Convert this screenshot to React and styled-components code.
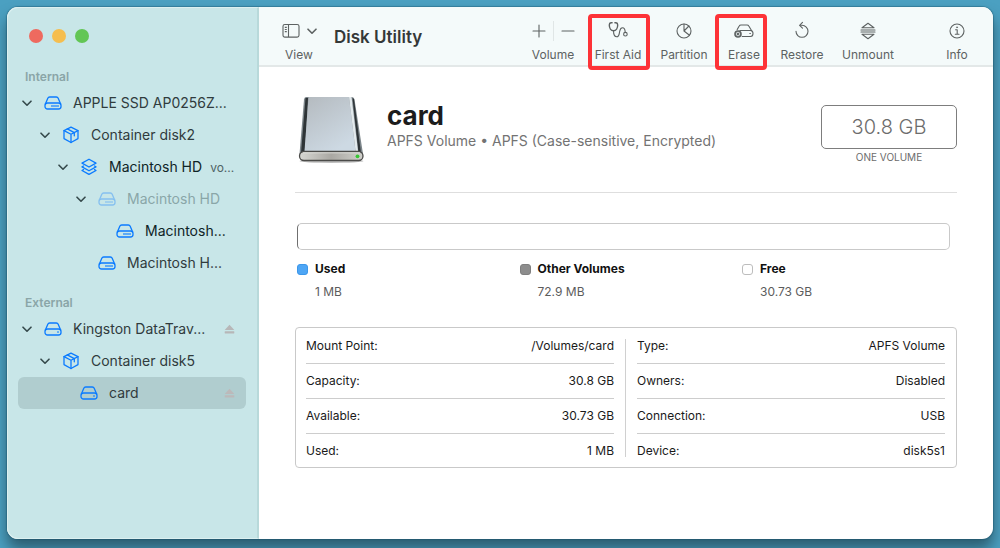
import React, { useState } from 'react';
import styled, { createGlobalStyle } from 'styled-components';

const GlobalStyle = createGlobalStyle`
    *,
    *::before {
        box-sizing: border-box;
    }
    body {
        margin: 0;
        font-family: Inter, "Liberation Sans", sans-serif;
        color: #1d1d1d;
        background: #4ba0c1;
    }
    button {
        padding: 0;
        border: 0;
        background: transparent;
        font: inherit;
        color: inherit;
    }
    svg {
        display: block;
        flex: none;
    }
`

const Desktop = styled.div`
    display: flex;
    min-height: 100vh;
    padding: 7px 7px 9px;
    overflow: hidden;
    background: #4ba0c1;
`
const Window = styled.div`
    display: flex;
    flex: 1;
    border-radius: 11px;
    background: #fff;
    box-shadow: 0 0 1px 1px rgba(20, 80, 105, 0.4), 0 10px 14px rgba(25, 50, 60, 0.6);
`
const Sidebar = styled.aside`
    flex: none;
    width: 252px;
    padding: 21px 11px 0 10px;
    border: 1px solid #dcf0f0;
    border-right: 2px solid #b8d9da;
    border-radius: 11px 0 0 11px;
    background: #c8e6e8;
`
const Lights = styled.div`
    display: flex;
    gap: 9px;
    padding-left: 11px;
    margin-bottom: 26px;
`
const Light = styled.button`
    width: 14px;
    height: 14px;
    border-radius: 50%;
    background: ${(props) => props.$color};
`
const Group = styled.section`
    margin-bottom: 16px;
`
const GroupTitle = styled.h2`
    margin: 0 0 2px;
    padding-left: 7px;
    font-size: 12px;
    line-height: 16px;
    font-weight: 600;
    color: #8aa5a7;
`
const DiskRow = styled.div`
    display: flex;
    align-items: center;
    height: 32px;
    padding-left: ${(props) => 3 + props.$level * 18}px;
    padding-right: 11px;
    border-radius: 6px;
    background: ${(props) => (props.$active ? '#b0cdcf' : 'transparent')};
`
const Toggle = styled.button`
    display: flex;
    flex: none;
    justify-content: center;
    width: 12px;
    margin-right: 11px;
    color: #35494b;
`
const DiskButton = styled.button`
    display: flex;
    align-items: center;
    gap: 11px;
    flex: 1;
    min-width: 0;
    font-size: 14px;
    line-height: 20px;
    white-space: nowrap;
    color: ${(props) => (props.$dim ? '#8aa6a8' : props.$strong ? '#0e2326' : '#303b3d')};
    svg {
        color: #0b7bff;
        opacity: ${(props) => (props.$dim ? 0.35 : 1)};
    }
    small {
        margin-left: 8px;
        font-size: 12px;
        color: #4f6365;
    }
`
const Eject = styled.button`
    color: ${(props) => (props.$active ? '#bcb9ba' : '#b7b7b8')};
`
const Main = styled.main`
    flex: 1;
    min-width: 0;
`
const Toolbar = styled.header`
    display: flex;
    height: 60px;
    padding-right: 8px;
    border-bottom: 2px solid #e3e8e8;
    border-radius: 0 11px 0 0;
    background: #f4fafa;
    color: #5d6262;
`
const ViewMenu = styled.button`
    display: flex;
    flex-direction: column;
    gap: 5px;
    margin-left: 23px;
    padding-top: 14px;
    text-align: left;
    > span + span {
        padding-left: 3px;
    }
`
const Tool = styled.button`
    position: relative;
    display: flex;
    flex-direction: column;
    align-items: center;
    gap: 5px;
    width: ${(props) => props.$width}px;
    padding-top: 14px;
`
const ToolPair = styled.div`
    display: flex;
    flex-direction: column;
    align-items: center;
    gap: 5px;
    width: 64px;
    padding-top: 14px;
`
const PairButtons = styled.div`
    display: flex;
    button + button {
        padding-left: 4px;
        border-left: 1px solid #e0e6e6;
    }
    button:first-child {
        padding-right: 4px;
    }
`
const ToolIcon = styled.span`
    display: flex;
    align-items: center;
    gap: 7px;
    height: 20px;
`
const ToolLabel = styled.span`
    font-size: 12px;
    line-height: 18px;
    white-space: nowrap;
`
const Highlight = styled.span`
    position: absolute;
    top: 7px;
    bottom: -5px;
    left: ${(props) => props.$left}px;
    right: ${(props) => props.$right}px;
    border: 4px solid #fd3237;
    border-radius: 4px;
`
const Title = styled.h1`
    flex: 1;
    margin: 0 0 0 17px;
    padding-top: 18px;
    font-size: 17px;
    line-height: 24px;
    font-weight: 600;
    color: #343838;
`
const Gap = styled.span`
    width: 26px;
`
const Content = styled.div`
    padding: 29px 36px 24px;
`
const Hero = styled.section`
    display: flex;
    align-items: flex-start;
    height: 97px;
    border-bottom: 1px solid #dedede;
`
const Heading = styled.div`
    flex: 1;
    padding: 4px 0 0 18px;
    h2 {
        margin: 0;
        font-size: 26px;
        line-height: 31px;
        font-weight: 700;
        color: #1c1c1c;
    }
    p {
        margin: 0;
        font-size: 14px;
        line-height: 20px;
        color: #737373;
    }
`
const Capacity = styled.div`
    width: 136px;
    padding-top: 9px;
    text-align: center;
    color: #6c6c6c;
    strong {
        display: block;
        border: 1px solid #7d7d7d;
        border-radius: 5px;
        font-size: 20px;
        line-height: 42px;
        font-weight: 300;
    }
    span {
        display: block;
        font-size: 10px;
        line-height: 16px;
    }
`
const UsageBar = styled.div`
    height: 27px;
    margin: 30px 7px 0 2px;
    border: 1px solid #c9c9c9;
    border-left-color: #6f6f6f;
    border-radius: 5px;
`
const Legend = styled.dl`
    display: grid;
    grid-template-columns: 1fr 1fr 215px;
    margin: 9px 0 0 2px;
`
const LegendItem = styled.div`
    dt {
        display: flex;
        align-items: center;
        gap: 7px;
        font-size: 12px;
        line-height: 20px;
        font-weight: 700;
        color: #111;
    }
    dt::before {
        content: '';
        width: 11px;
        height: 11px;
        border: 1px solid ${(props) => props.$border};
        border-radius: 3px;
        background: ${(props) => props.$color};
    }
    dd {
        margin: 4px 0 0 18px;
        font-size: 12px;
        line-height: 18px;
        color: #5c5c5c;
    }
`
const InfoPanel = styled.section`
    display: flex;
    margin-top: 26px;
    padding: 1px 11px 0 10px;
    border: 1px solid #c9c9c9;
    border-radius: 4px;
`
const Divider = styled.span`
    width: 1px;
    margin: 10px 11px;
    background: #d0d0d0;
`
const InfoTable = styled.table`
    flex: 1;
    border-spacing: 0;
    font-size: 12px;
    line-height: 17px;
    color: #1a1a1a;
    th,
    td {
        padding: 8px 0 9px;
        border-bottom: 1px solid #cdcdcd;
        font-weight: 400;
        text-align: left;
    }
    td {
        text-align: right;
    }
    tr:last-child > * {
        padding-bottom: 8px;
        border-bottom: 0;
    }
`

function Chevron() {
  return (
    <svg width="10" height="10" viewBox="0 0 10 10" fill="none" stroke="currentColor" strokeWidth="1.6" strokeLinecap="round" strokeLinejoin="round">
      <path d="M1 3.2 5 7.2 9 3.2" />
    </svg>
  );
}

function DriveIcon({ external }) {
  return (
    <svg width="18" height="18" viewBox="0 0 18 18" fill="none" stroke="currentColor" strokeWidth="1.3" strokeLinejoin="round">
      <path d="M1.3 10.2 3.8 4.2Q4.3 3 5.7 3h6.6Q13.7 3 14.2 4.2L16.7 10.2" />
      <rect x="1" y="9" width="16" height="6" rx="2.5" />
      {external ? <circle cx="14" cy="12" r=".5" fill="currentColor" strokeWidth=".6" /> : <path d="M7 12h8" strokeWidth="1.5" opacity=".75" />}
    </svg>
  );
}

function BoxIcon() {
  return (
    <svg width="18" height="18" viewBox="0 0 18 18" fill="none" stroke="currentColor" strokeWidth="1.3" strokeLinejoin="round" strokeLinecap="round">
      <path d="M9 1.2 16 4.6v8L9 16.5 2 12.6v-8Z" />
      <path d="M2 4.6 9 8.3l7-3.7M9 8.3v8.2M5.3 2.9l7 3.7v3.2" />
    </svg>
  );
}

function LayersIcon() {
  return (
    <svg width="18" height="18" viewBox="0 0 18 18" fill="none" stroke="currentColor" strokeWidth="1.3" strokeLinejoin="round" strokeLinecap="round">
      <path d="m9 1.2 7 3.9-7 3.9-7-3.9Z" />
      <path d="m3.5 8-1.5.9 7 3.9 7-3.9L14.5 8M3.5 11.6l-1.5.9 7 3.9 7-3.9-1.5-.9" />
    </svg>
  );
}

function EjectIcon() {
  return (
    <svg width="11" height="11" viewBox="0 0 11 11" fill="currentColor">
      <path d="M5.5.8 10.3 6H.7Z" />
      <rect x=".7" y="7.3" width="9.6" height="2.2" rx=".4" />
    </svg>
  );
}

const toolIcons = {
  aid: (
    <>
      <path d="M4.1 1.8H3Q1.300 2 1.300 4c0 3 1.600 5.800 4.200 5.800S9.700 7 9.700 4Q9.700 2 8 1.800H6.900" strokeWidth="1.400" />
      <path d="M5.500 9.800c0 3.500 1.300 6 3.300 6 2.700 0 2.300-3.500 3-6 .5-2 1.400-3 2.700-3 1.900 0 2.600 1.800 2.700 4.500" />
      <circle cx="17.400" cy="13.200" r="1.800" />
    </>
  ),
  pie: (
    <>
      <circle cx="10" cy="10" r="7" />
      <path d="M10 3v7l4.900-5M10 10l5.500 4.200" />
    </>
  ),
  erase: (
    <>
      <path d="M3.200 8.600 5.200 5Q5.700 4 7 4h6Q14.300 4 14.800 5l3 5" />
      <path d="M6 9.500h10.500q2.500 0 2.500 3t-2.500 3H8.200M15.800 12.500h.6" />
      <circle cx="4" cy="13" r="3" strokeWidth="1.600" />
      <path d="m2.900 11.900 2.200 2.200m0-2.200-2.200 2.200" />
    </>
  ),
  restore: (
    <>
      <path d="M8.300 4.300H10A6 6 0 1 1 4 10.300" />
      <path d="M10.500 1.300 7.600 4.300l2.900 2.900" />
    </>
  ),
  unmount: (
    <>
      <path d="M10 2.200 16 6.700H4ZM10 17.800 4 13.300h12Z" />
      <path d="M3 9h14M3 11h14" />
    </>
  ),
  info: (
    <>
      <circle cx="10" cy="10" r="7" />
      <path d="M8.600 8.800h1.600v4.400M8.300 13.300h3.700" />
      <circle cx="10" cy="6.300" r=".6" fill="currentColor" strokeWidth=".5" />
    </>
  ),
  plus: <path d="M10 4v12M4 10h12" />,
  minus: <path d="M4 10h12" />,
};

function ToolGlyph({ name }) {
  return (
    <svg width="20" height="20" viewBox="0 0 20 20" fill="none" stroke="currentColor" strokeWidth="1.1" strokeLinecap="round" strokeLinejoin="round">
      {toolIcons[name]}
    </svg>
  );
}

function SidebarIcon() {
  return (
    <svg width="18" height="16" viewBox="0 0 18 16" fill="none" stroke="currentColor" strokeWidth="1.1">
      <rect x="1" y="1.5" width="16" height="12.6" rx="1.8" />
      <path d="M6.5 1.5v12.6M2.8 4.4h2M2.8 6.5h2M2.8 8.6h2" />
    </svg>
  );
}

function DriveArt() {
  return (
    <svg width="74" height="74" viewBox="0 0 74 74">
      <defs>
        <linearGradient id="top" x1="0" y1="0" x2=".6" y2="1">
          <stop offset="0" stopColor="#b4babf" />
          <stop offset="1" stopColor="#cdd9e3" />
        </linearGradient>
        <linearGradient id="front" x1="0" y1="0" x2="1" y2="0">
          <stop offset="0" stopColor="#d7d7d3" />
          <stop offset=".5" stopColor="#aaa8a3" />
          <stop offset="1" stopColor="#d0d0cb" />
        </linearGradient>
      </defs>
      <ellipse cx="36.5" cy="65" rx="32" ry="2" fill="#000" opacity=".25" />
      <path d="M11 1h46q2 0 2.500 2.500L68 58H4.500L9 3.500Q9.300 1 11 1Z" fill="#7d868b" />
      <path d="M10.500 2 6 57h4L13 2ZM59 3 66 57h-2.500L57.500 2Z" fill="#2e3437" />
      <path d="M13.500 1h40.500l6.500 54H9.500Z" fill="url(#top)" />
      <path d="M54 1h2.500l6.500 54h-2.500Z" fill="#e2e9ec" />
      <rect x="4.500" y="55.5" width="63.5" height="9" rx="4.500" fill="url(#front)" stroke="#4b4b49" strokeWidth="1.3" />
      <path d="M8 56.800h57" stroke="#eeeeea" strokeWidth=".8" />
      <circle cx="62.5" cy="60.3" r="1.9" fill="#37c634" />
    </svg>
  );
}

const groups = [
  {
    title: 'Internal',
    disks: [
      { name: 'APPLE SSD AP0256Z...', level: 0, icon: 'drive', open: true },
      { name: 'Container disk2', level: 1, icon: 'box', open: true },
      { name: 'Macintosh HD', note: 'vo...', level: 2, icon: 'layers', open: true, strong: true },
      { name: 'Macintosh HD', level: 3, icon: 'drive', open: true, dim: true },
      { name: 'Macintosh...', level: 4, icon: 'drive', strong: true },
      { name: 'Macintosh H...', level: 3, icon: 'drive' },
    ],
  },
  {
    title: 'External',
    disks: [
      { name: 'Kingston DataTrav...', level: 0, icon: 'external', open: true, eject: true },
      { name: 'Container disk5', level: 1, icon: 'box', open: true },
      { name: 'card', level: 2, icon: 'external', eject: true },
    ],
  },
];

const icons = {
  drive: <DriveIcon />,
  external: <DriveIcon external />,
  box: <BoxIcon />,
  layers: <LayersIcon />,
};

const legend = [
  { label: 'Used', value: '1 MB', color: '#4ea6f5', border: '#3c97ea' },
  { label: 'Other Volumes', value: '72.9 MB', color: '#8d8d8d', border: '#7f7f7f' },
  { label: 'Free', value: '30.73 GB', color: '#fff', border: '#bdbdbd' },
];

const leftInfo = [
  ['Mount Point:', '/Volumes/card'],
  ['Capacity:', '30.8 GB'],
  ['Available:', '30.73 GB'],
  ['Used:', '1 MB'],
];

const rightInfo = [
  ['Type:', 'APFS Volume'],
  ['Owners:', 'Disabled'],
  ['Connection:', 'USB'],
  ['Device:', 'disk5s1'],
];

function ToolButton({ icon, label, width, children }) {
  return (
    <Tool type="button" $width={width}>
      <ToolIcon><ToolGlyph name={icon} /></ToolIcon>
      <ToolLabel>{label}</ToolLabel>
      {children}
    </Tool>
  );
}

function Info({ rows }) {
  return (
    <InfoTable>
      <tbody>
        {rows.map(([label, value]) => (
          <tr key={label}>
            <th scope="row">{label}</th>
            <td>{value}</td>
          </tr>
        ))}
      </tbody>
    </InfoTable>
  );
}

export default function App() {
  const [selected, setSelected] = useState('card');

  return (
    <>
      <GlobalStyle />
      <Desktop>
        <Window>
          <Sidebar>
            <Lights>
              <Light type="button" aria-label="Close" $color="#ee6a5f" />
              <Light type="button" aria-label="Minimize" $color="#f5be4f" />
              <Light type="button" aria-label="Zoom" $color="#62c655" />
            </Lights>
            {groups.map((group) => (
              <Group key={group.title}>
                <GroupTitle>{group.title}</GroupTitle>
                {group.disks.map((disk, index) => (
                  <DiskRow key={index} $level={disk.level} $active={disk.name === selected}>
                    <Toggle type="button" aria-label="Toggle" disabled={!disk.open}>{disk.open && <Chevron />}</Toggle>
                    <DiskButton type="button" $dim={disk.dim} $strong={disk.strong} onClick={() => setSelected(disk.name)}>
                      {icons[disk.icon]}
                      <span>{disk.name}{disk.note && <small>{disk.note}</small>}</span>
                    </DiskButton>
                    {disk.eject && <Eject type="button" aria-label="Eject" $active={disk.name === selected}><EjectIcon /></Eject>}
                  </DiskRow>
                ))}
              </Group>
            ))}
          </Sidebar>
          <Main>
            <Toolbar>
              <ViewMenu type="button">
                <ToolIcon><SidebarIcon /><Chevron /></ToolIcon>
                <ToolLabel>View</ToolLabel>
              </ViewMenu>
              <Title>Disk Utility</Title>
              <ToolPair>
                <PairButtons>
                  <button type="button" aria-label="Add volume"><ToolGlyph name="plus" /></button>
                  <button type="button" aria-label="Remove volume"><ToolGlyph name="minus" /></button>
                </PairButtons>
                <ToolLabel>Volume</ToolLabel>
              </ToolPair>
              <ToolButton icon="aid" label="First Aid" width={66}><Highlight $left={3} $right={1} /></ToolButton>
              <ToolButton icon="pie" label="Partition" width={66} />
              <ToolButton icon="erase" label="Erase" width={54}><Highlight $left={-2} $right={4} /></ToolButton>
              <ToolButton icon="restore" label="Restore" width={62} />
              <ToolButton icon="unmount" label="Unmount" width={70} />
              <Gap />
              <ToolButton icon="info" label="Info" width={56} />
            </Toolbar>
            <Content>
              <Hero>
                <DriveArt />
                <Heading>
                  <h2>card</h2>
                  <p>APFS Volume • APFS (Case-sensitive, Encrypted)</p>
                </Heading>
                <Capacity>
                  <strong>30.8 GB</strong>
                  <span>ONE VOLUME</span>
                </Capacity>
              </Hero>
              <UsageBar />
              <Legend>
                {legend.map((item) => (
                  <LegendItem key={item.label} $color={item.color} $border={item.border}>
                    <dt>{item.label}</dt>
                    <dd>{item.value}</dd>
                  </LegendItem>
                ))}
              </Legend>
              <InfoPanel>
                <Info rows={leftInfo} />
                <Divider />
                <Info rows={rightInfo} />
              </InfoPanel>
            </Content>
          </Main>
        </Window>
      </Desktop>
    </>
  );
}
